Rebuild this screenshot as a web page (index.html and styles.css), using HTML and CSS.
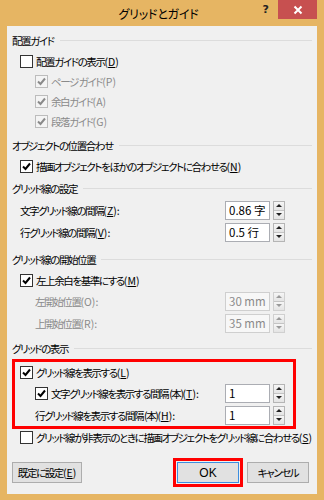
FILE: index.html
```html
<!DOCTYPE html>
<html lang="ja">
<head>
<meta charset="utf-8">
<link rel="stylesheet" href="styles.css">
</head>
<body>
<div class="window">
  <div class="titlebar">
    <div class="title">グリッドとガイド</div>
    <div class="tb-buttons">
      <span class="help">?</span>
      <span class="close"><svg width="10" height="10" viewBox="0 0 10 10"><path d="M1.5 1.5 L8.5 8.5 M8.5 1.5 L1.5 8.5" stroke="#fff" stroke-width="2"/></svg></span>
    </div>
  </div>
  <div class="client">
    <div class="section s1">
      <div class="hdr"><span>配置ガイド</span><i class="rule"></i></div>
      <div class="row ind1"><span class="cb"></span><span>配置ガイドの表示<span class="k">(<u>D</u>)</span></span></div>
      <div class="row ind2 dis"><span class="cb on"><svg viewBox="0 0 11 11"><path d="M2 5.5 L4.5 8 L9 2.5"/></svg></span><span>ページ ガイド<span class="k">(P)</span></span></div>
      <div class="row ind2 dis"><span class="cb on"><svg viewBox="0 0 11 11"><path d="M2 5.5 L4.5 8 L9 2.5"/></svg></span><span>余白ガイド<span class="k">(A)</span></span></div>
      <div class="row ind2 dis"><span class="cb on"><svg viewBox="0 0 11 11"><path d="M2 5.5 L4.5 8 L9 2.5"/></svg></span><span>段落ガイド<span class="k">(G)</span></span></div>
    </div>

    <div class="section s2">
      <div class="hdr"><span>オブジェクトの位置合わせ</span><i class="rule"></i></div>
      <div class="row ind1"><span class="cb on"><svg viewBox="0 0 11 11"><path d="M2 5.5 L4.5 8 L9 2.5"/></svg></span><span>描画オブジェクトをほかのオブジェクトに合わせる<span class="k">(<u>N</u>)</span></span></div>
    </div>

    <div class="section s3">
      <div class="hdr"><span>グリッド線の設定</span><i class="rule"></i></div>
      <div class="row field ind1"><span class="lbl">文字グリッド線の間隔<span class="k">(<u>Z</u>):</span></span>
        <span class="spin"><span class="edit">0.86 字</span><span class="arrows"><b class="up"></b><b class="down"></b></span></span></div>
      <div class="row field ind1"><span class="lbl">行グリッド線の間隔<span class="k">(<u>V</u>):</span></span>
        <span class="spin"><span class="edit">0.5 行</span><span class="arrows"><b class="up"></b><b class="down"></b></span></span></div>
    </div>

    <div class="section s4">
      <div class="hdr"><span>グリッド線の開始位置</span><i class="rule"></i></div>
      <div class="row ind1"><span class="cb on"><svg viewBox="0 0 11 11"><path d="M2 5.5 L4.5 8 L9 2.5"/></svg></span><span>左上余白を基準にする<span class="k">(<u>M</u>)</span></span></div>
      <div class="row field ind2 dis"><span class="lbl">左開始位置<span class="k">(O):</span></span>
        <span class="spin"><span class="edit">30 mm</span><span class="arrows"><b class="up"></b><b class="down"></b></span></span></div>
      <div class="row field ind2 dis"><span class="lbl">上開始位置<span class="k">(R):</span></span>
        <span class="spin"><span class="edit">35 mm</span><span class="arrows"><b class="up"></b><b class="down"></b></span></span></div>
    </div>

    <div class="section s5">
      <div class="hdr"><span>グリッドの表示</span><i class="rule"></i></div>
      <div class="highlight">
        <div class="row hl1"><span class="cb on"><svg viewBox="0 0 11 11"><path d="M2 5.5 L4.5 8 L9 2.5"/></svg></span><span>グリッド線を表示する<span class="k">(<u>L</u>)</span></span></div>
        <div class="row field hl2"><span class="lbl"><span class="cb on"><svg viewBox="0 0 11 11"><path d="M2 5.5 L4.5 8 L9 2.5"/></svg></span>文字グリッド線を表示する間隔 (本)<span class="k">(<u>T</u>):</span></span>
          <span class="spin"><span class="edit">1</span><span class="arrows"><b class="up"></b><b class="down"></b></span></span></div>
        <div class="row field hl2"><span class="lbl">行グリッド線を表示する間隔 (本)<span class="k">(<u>H</u>):</span></span>
          <span class="spin"><span class="edit">1</span><span class="arrows"><b class="up"></b><b class="down"></b></span></span></div>
      </div>
      <div class="row ind1 last"><span class="cb"></span><span>グリッド線が非表示のときに描画オブジェクトをグリッド線に合わせる<span class="k">(<u>S</u>)</span></span></div>
    </div>

    <div class="buttons">
      <span class="btn btn-default">既定に設定<span class="k">(<u>E</u>)</span></span>
      <span class="ok-mark"><span class="btn btn-ok">OK</span></span>
      <span class="btn btn-cancel">キャンセル</span>
    </div>
  </div>
</div>
</body>
</html>
```

FILE: styles.css
```css
* { box-sizing: border-box; }
html, body { margin: 0; padding: 0; }
body {
  font-family: "Noto Sans CJK JP", "Noto Sans", sans-serif;
  font-feature-settings: "palt";
  font-size: 10.5px;
  color: #000;
  background: #e6b563;
}
u { text-decoration: underline; text-underline-offset: 1px; }
.k { letter-spacing: 0; }

.window {
  width: 324px;
  height: 500px;
  background: #e6b563;
  display: flex;
  flex-direction: column;
}

.titlebar {
  height: 26px;
  display: grid;
  padding-right: 7px;
}
.title, .tb-buttons { grid-area: 1 / 1; }
.title {
  text-align: center;
  font-size: 12px;
  line-height: 27px;
  letter-spacing: -0.2px;
}
.tb-buttons {
  justify-self: end;
  display: flex;
  align-items: flex-start;
}
.help {
  font-family: "DejaVu Sans", sans-serif;
  font-weight: bold;
  font-size: 11px;
  color: #222;
  margin-right: 9px;
  line-height: 20px;
}
.close {
  width: 39px;
  height: 19px;
  background: #c75050;
  display: flex;
  align-items: center;
  justify-content: center;
}
.close svg { display: block; }

.client {
  flex: 1;
  margin: 0 7px 6px 7px;
  background: #f0f0f0;
  padding: 3px 5px 0 5px;
  display: flex;
  flex-direction: column;
  letter-spacing: -1.4px;
}

.section { display: flex; flex-direction: column; }
.s2 { margin-top: 3px; }
.s3 { margin-top: 1px; }
.s4 { margin-top: 5px; }
.s5 { margin-top: 3px; }

.hdr {
  height: 22px;
  display: flex;
  align-items: center;
}
.hdr .rule {
  flex: 1;
  height: 1px;
  background: #dcdcdc;
  margin-left: 6px;
  margin-top: 1px;
}

.row {
  height: 20px;
  display: flex;
  align-items: center;
  white-space: nowrap;
}
.row.field { height: 22px; }
.ind1 { padding-left: 8px; }
.ind2 { padding-left: 23px; }
.dis { color: #8a8a8a; }

.cb {
  width: 13px;
  height: 13px;
  border: 1px solid #333;
  background: #fff;
  margin-right: 3px;
  flex: none;
  display: inline-flex;
  align-items: center;
  justify-content: center;
}
.cb svg { width: 11px; height: 11px; display: block; }
.cb svg path { fill: none; stroke: #000; stroke-width: 2; }
.dis .cb { border-color: #bcbcbc; background: #f4f4f4; }
.dis .cb svg path { stroke: #8a8a8a; }

.lbl {
  flex: 1;
  display: flex;
  align-items: center;
}

.spin {
  display: flex;
  align-items: stretch;
  height: 19px;
  margin-right: 27px;
  letter-spacing: 0;
}
.edit {
  width: 45px;
  background: #fff;
  border: 1px solid #abadb3;
  font-size: 11.5px;
  line-height: 17px;
  padding-left: 3px;
  white-space: nowrap;
}
.arrows {
  width: 12px;
  margin-left: 3px;
  display: flex;
  flex-direction: column;
  border: 1px solid #b5b5b5;
  background: #ececec;
}
.arrows b {
  flex: 1;
  display: flex;
  align-items: center;
  justify-content: center;
  background: linear-gradient(#f6f6f6, #e4e4e4);
}
.arrows b.up { border-bottom: 1px solid #c4c4c4; }
.arrows b::before {
  content: "";
  width: 0; height: 0;
  border-left: 3px solid transparent;
  border-right: 3px solid transparent;
}
.arrows b.up::before { border-bottom: 3px solid #222; }
.arrows b.down::before { border-top: 3px solid #222; }
.dis .edit { background: #f7f7f7; border-color: #cfcfcf; color: #8a8a8a; }
.dis .arrows { border-color: #d0d0d0; }
.dis .arrows b.up::before { border-bottom-color: #9a9a9a; }
.dis .arrows b.down::before { border-top-color: #9a9a9a; }

.highlight {
  border: 3px solid #ff0000;
  margin-right: 16px;
  margin-bottom: -2px;
  display: flex;
  flex-direction: column;
}
.hl1 { padding-left: 5px; }
.hl2 { padding-left: 20px; }
.highlight .spin { margin-right: 8px; }

.buttons {
  margin-top: 10px;
  height: 31px;
  display: flex;
  align-items: center;
  padding-right: 3px;
}
.btn {
  height: 21px;
  background: #e1e1e1;
  border: 1px solid #adadad;
  display: flex;
  align-items: center;
  justify-content: center;
  white-space: nowrap;
}
.btn-default { width: 70px; }
.ok-mark {
  margin-left: auto;
  border: 3px solid #ff0000;
  padding: 1px;
}
.btn-ok { width: 62px; border-color: #3c8ee0; font-family: "Liberation Sans", sans-serif; font-size: 12px; letter-spacing: 0; }
.btn-cancel { width: 62px; margin-left: 4px; }
```
